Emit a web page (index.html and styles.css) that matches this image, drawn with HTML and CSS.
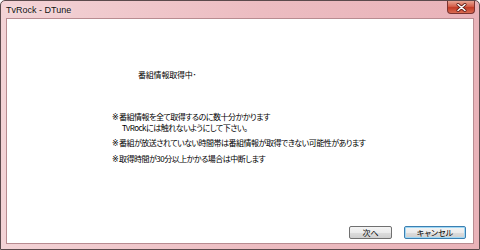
FILE: index.html
```html
<!DOCTYPE html>
<html lang="ja">
<head>
    <meta charset="UTF-8">
    <title>TvRock - DTune</title>
    <link rel="stylesheet" href="styles.css">
</head>
<body>
    <div class="window">
        <div class="titlebar">
            <span class="title">TvRock - DTune</span>
            <div class="close">
                <svg width="11" height="9" viewBox="0 0 11 9">
                    <path d="M2 1.5 L9 7.5 M9 1.5 L2 7.5" stroke="#5a1a14" stroke-width="3" stroke-linecap="round"/>
                    <path d="M2 1.5 L9 7.5 M9 1.5 L2 7.5" stroke="#ffffff" stroke-width="1.6" stroke-linecap="round"/>
                </svg>
            </div>
        </div>
        <div class="content">
            <div class="heading">番組情報取得中･</div>
            <div class="notes">
                <p><span class="mark">※</span>番組情報を全て取得するのに数十分かかります<br><span class="indent">TvRockには触れないようにして下さい。</span></p>
                <p><span class="mark">※</span>番組が放送されていない時間帯は番組情報が取得できない可能性があります</p>
                <p><span class="mark">※</span>取得時間が30分以上かかる場合は中断します</p>
            </div>
            <div class="footer">
                <button class="btn">次へ</button>
                <button class="btn default">キャンセル</button>
            </div>
        </div>
    </div>
</body>
</html>
```

FILE: styles.css
```css
* {
    margin: 0;
    padding: 0;
    box-sizing: border-box;
}

body {
    width: 480px;
    height: 250px;
    overflow: hidden;
    background-color: #ffffff;
}

.window {
    width: 480px;
    height: 250px;
    display: flex;
    flex-direction: column;
    border: 1px solid #5b4a4c;
    border-radius: 5px 5px 0 0;
    background: linear-gradient(to right, #f3d3d6, #ecbcc1 55%, #e9b3b9);
}

.titlebar {
    height: 17px;
    display: flex;
    align-items: flex-start;
    padding-left: 5px;
}

.title {
    font-family: "Liberation Sans", Arial, sans-serif;
    font-size: 9px;
    color: #111111;
    margin-top: 4px;
    text-shadow: 0 0 4px #fff3f4;
}

.close {
    margin-left: auto;
    margin-right: 4px;
    width: 28px;
    height: 13px;
    display: flex;
    justify-content: center;
    align-items: center;
    border: 1px solid #7a3330;
    border-top: none;
    border-radius: 0 0 4px 4px;
    background: linear-gradient(to bottom, #e8a493, #d4604b 45%, #c23b26 55%, #d96c52);
}

.content {
    flex: 1;
    margin: 0 5px 5px;
    background-color: #ffffff;
    border: 1px solid #b88c91;
    display: flex;
    flex-direction: column;
    font-family: "Noto Sans CJK JP", sans-serif;
    font-size: 8px;
    line-height: 10px;
    color: #000000;
    font-feature-settings: "palt";
}

.mark {
    font-family: "DejaVu Sans", sans-serif;
    display: inline-block;
    width: 7px;
}

.heading {
    margin-top: 51px;
    padding-left: 131px;
    letter-spacing: -0.2px;
}

.notes {
    margin-top: 32px;
    padding-left: 105px;
    letter-spacing: -0.5px;
}

.notes p {
    margin-bottom: 5px;
}

.indent {
    padding-left: 10px;
}

.footer {
    margin-top: auto;
    display: flex;
    justify-content: flex-end;
    gap: 12px;
    padding: 0 7px 4px 0;
}

.btn {
    height: 13px;
    font-family: "Noto Sans CJK JP", sans-serif;
    font-size: 8px;
    line-height: 10px;
    color: #000000;
    border: 1px solid #707070;
    border-radius: 2px;
    background: linear-gradient(to bottom, #f4f4f4 0%, #ebebeb 50%, #dddddd 51%, #cfcfcf 100%);
    font-feature-settings: "palt";
    width: 43px;
}

.btn.default {
    width: 62px;
    border-color: #3c7fb1;
    box-shadow: inset 0 0 0 1px #9fd8f5;
}
```
